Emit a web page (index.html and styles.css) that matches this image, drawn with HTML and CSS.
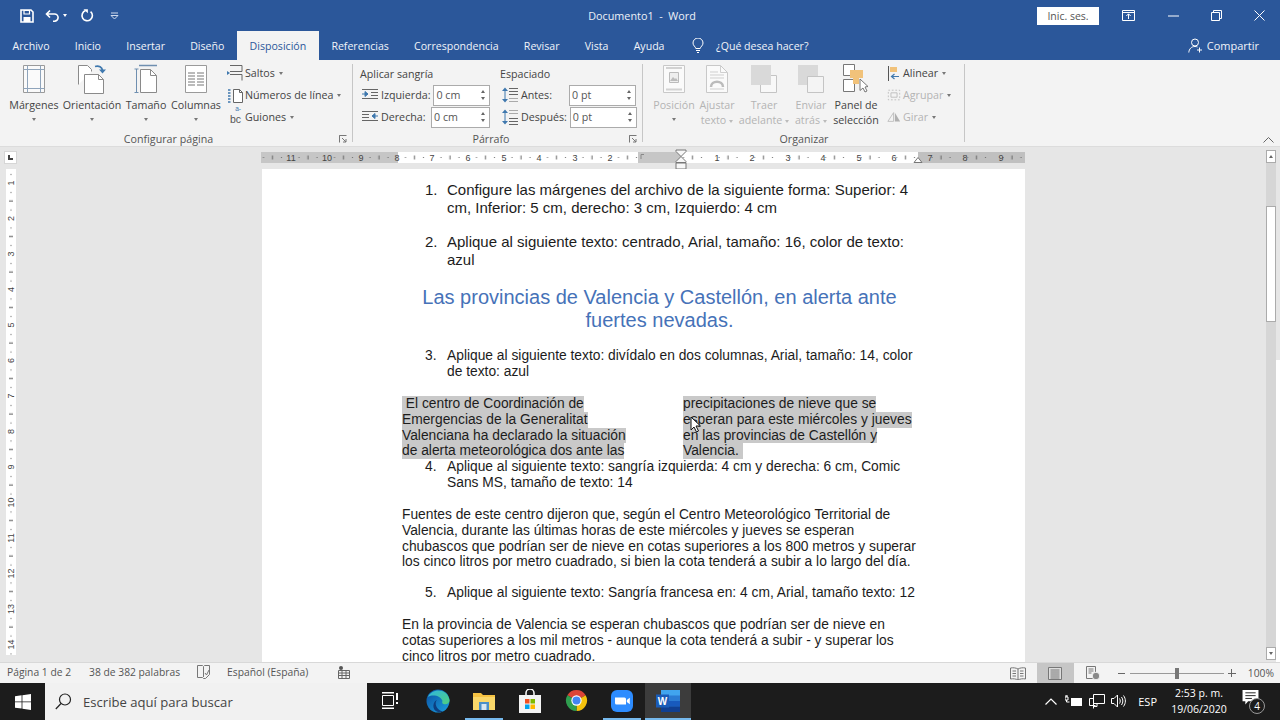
FILE: index.html
```html
<!DOCTYPE html>
<html lang="es">
<head>
<meta charset="utf-8">
<title>Documento1 - Word</title>
<link rel="stylesheet" href="styles.css">
</head>
<body>
<div class="window">
  <header class="titlebar">
    <div class="qat">
      <svg class="qat-save" width="16" height="16" viewBox="0 0 16 16"><path d="M2 2h10l2 2v10H2z" fill="none" stroke="#fff" stroke-width="1.6"/><path d="M5 2.500h5.500V6H5z" fill="none" stroke="#fff" stroke-width="1.2"/><path d="M4.500 9h7v5h-7z" fill="#fff"/></svg>
      <svg class="qat-undo" width="16" height="14" viewBox="0 0 16 14"><path d="M5 1.500 1.500 5 5 8.500M2 5h7.500a3.600 3.600 0 0 1 0 7.200H8" fill="none" stroke="#fff" stroke-width="1.6"/></svg>
      <span class="caret caret-white qat-caret"></span>
      <svg class="qat-redo" width="14" height="14" viewBox="0 0 14 14"><path d="M10.600 2.600a5.200 5.200 0 1 1-5-1" fill="none" stroke="#fff" stroke-width="1.6"/><path d="M3.500 .3h4.400v4z" fill="#fff"/></svg>
      <svg class="qat-more" width="9" height="8" viewBox="0 0 9 8"><path d="M1 1h7" stroke="#cfdaec"/><path d="M1 3.500h7L4.500 7z" fill="none" stroke="#cfdaec"/></svg>
    </div>
    <div class="doc-title">Documento1&nbsp; -&nbsp; Word</div>
    <div class="win-controls">
      <button class="signin">Inic. ses.</button>
      <svg class="wc-display" width="13" height="11" viewBox="0 0 13 11"><path d="M.5.500h12v10H.5z" fill="none" stroke="#fff"/><path d="M.5 2.500h12M6.500 9V4M4.300 6l2.200-2.200L8.700 6" fill="none" stroke="#fff"/></svg>
      <svg class="wc-min" width="11" height="2" viewBox="0 0 11 2"><path d="M0 1h11" stroke="#fff"/></svg>
      <svg class="wc-max" width="11" height="11" viewBox="0 0 11 11"><path d="M.5 2.500h8v8h-8zM2.500 2.500v-2h8v8h-2" fill="none" stroke="#fff"/></svg>
      <svg class="wc-close" width="11" height="11" viewBox="0 0 11 11"><path d="M.5.500l10 10M10.500.500l-10 10" stroke="#fff"/></svg>
    </div>
  </header>

  <nav class="tabs">
    <span class="tab">Archivo</span>
    <span class="tab">Inicio</span>
    <span class="tab">Insertar</span>
    <span class="tab">Diseño</span>
    <span class="tab tab-active">Disposición</span>
    <span class="tab">Referencias</span>
    <span class="tab">Correspondencia</span>
    <span class="tab">Revisar</span>
    <span class="tab">Vista</span>
    <span class="tab">Ayuda</span>
    <svg class="tell-icon" width="12" height="15" viewBox="0 0 12 15"><path d="M3.800 10.500C3.500 8.500 1 7.800 1 5a5 5 0 0 1 10 0c0 2.800-2.500 3.500-2.800 5.500zM4 12.500h4M5 14.500h2" fill="none" stroke="#fff"/></svg>
    <span class="tell-text">¿Qué desea hacer?</span>
    <span class="share">
      <svg width="15" height="15" viewBox="0 0 15 15"><circle cx="7" cy="4.500" r="3.500" fill="none" stroke="#fff"/><path d="M.8 14.500c.3-3.500 2.400-6 6.200-6 1 0 1.800.2 2.500.5M11.500 9.500v5M9 12h5" fill="none" stroke="#fff"/></svg>
      Compartir
    </span>
  </nav>

  <section class="ribbon">
    <div class="group group-page">
      <div class="group-body">
        <div class="big big-margins">
          <svg class="big-icon" width="24" height="28" viewBox="0 0 24 28"><path d="M1.500.5h21v27h-21z" fill="#fafafa" stroke="#9a9a9a"/><path d="M5.500.5v27M18.500.5v27M1.500 4.500h21M1.500 23.500h21" fill="none" stroke="#8fa4bb"/></svg>
          <span class="big-label">Márgenes</span><span class="caret"></span>
        </div>
        <div class="big big-orient">
          <svg class="big-icon" width="30" height="30" viewBox="0 0 30 30"><path d="M1.500 20.500v-19h9l4 4v2" fill="#fff" stroke="#8a8a8a"/><path d="M7.500 10.500h14l5 5v14h-19z" fill="#fff" stroke="#8a8a8a"/><path d="M21.500 10.500v5h5" fill="none" stroke="#8a8a8a"/><path d="M18 2.500c4-1 7 .5 7.500 4" fill="none" stroke="#3f78ae" stroke-width="1.800"/><path d="M22 5.500h7l-3.500 4z" fill="#3f78ae"/></svg>
          <span class="big-label">Orientación</span><span class="caret"></span>
        </div>
        <div class="big big-size">
          <svg class="big-icon" width="24" height="30" viewBox="0 0 24 30"><path d="M5 1.500h18" stroke="#6f8fb0" stroke-width="1.500"/><path d="M2.500 5v24M.5 5h4M.5 28.500h4" fill="none" stroke="#6f8fb0"/><path d="M6.500 5.500h10l6 6v17h-16z" fill="#fff" stroke="#8a8a8a"/><path d="M16.500 5.500v6h6" fill="none" stroke="#8a8a8a"/></svg>
          <span class="big-label">Tamaño</span><span class="caret"></span>
        </div>
        <div class="big big-cols">
          <svg class="big-icon" width="22" height="28" viewBox="0 0 22 28"><path d="M.5.5h21v27H.5z" fill="#fff" stroke="#9a9a9a"/><path d="M3 8h7M12 8h7M3 11h7M12 11h7M3 14h7M12 14h7M3 17h7M12 17h7M3 20h7M12 20h7" stroke="#777"/></svg>
          <span class="big-label">Columnas</span><span class="caret"></span>
        </div>
        <div class="small-col small-col-page">
          <div class="small-row">
            <svg width="16" height="16" viewBox="0 0 16 16"><path d="M15 .5v6M3 .5h12M3 6.500h12M3 9.500h12M15 9.500v6" fill="none" stroke="#666"/><path d="M0 6l3 2-3 2z" fill="#3f78ae"/></svg>
            <span>Saltos</span><span class="caret"></span>
          </div>
          <div class="small-row">
            <svg width="16" height="16" viewBox="0 0 16 16"><path d="M6.500 2.500h6l3 3v10h-9z" fill="#fff" stroke="#666"/><path d="M12.500 2.500v3h3" fill="none" stroke="#666"/><path d="M1 3h3M1 6h3M1 9h3M1 12h3M1 15h3" stroke="#3f78ae" stroke-width="1.500" stroke-dasharray="2 .5"/></svg>
            <span>Números de línea</span><span class="caret"></span>
          </div>
          <div class="small-row">
            <span class="hyph-icon"><span class="hyph-a">a-</span><span class="hyph-bc">bc</span></span>
            <span>Guiones</span><span class="caret"></span>
          </div>
        </div>
      </div>
      <div class="group-label">Configurar página</div>
      <svg class="launcher" width="8" height="8" viewBox="0 0 8 8"><path d="M.5 3V.5h7M.5 .5v7M3 3l4 4M4 7h3V4" fill="none" stroke="#777"/></svg>
    </div>

    <div class="group group-para">
      <div class="group-body para-body">
        <div class="para-col para-indent">
          <div class="para-head">Aplicar sangría</div>
          <div class="para-row">
            <svg width="16" height="12" viewBox="0 0 16 12"><path d="M0 .5h16M9 3.500h7M9 6.500h7M0 9.500h16" stroke="#666"/><path d="M0 5h5M3 2.500l3 2.500-3 2.500z" fill="#3f78ae" stroke="#3f78ae"/></svg>
            <span>Izquierda:</span>
            <div class="spin spin-indent-a"><span class="spin-val">0 cm</span><span class="spin-arrows"><i class="up"></i><i class="down"></i></span></div>
          </div>
          <div class="para-row">
            <svg width="16" height="12" viewBox="0 0 16 12"><path d="M0 .5h16M0 3.500h7M0 6.500h7M0 9.500h16" stroke="#666"/><path d="M16 5h-5M13 2.500 10 5l3 2.500z" fill="#3f78ae" stroke="#3f78ae"/></svg>
            <span>Derecha:</span>
            <div class="spin spin-indent-b"><span class="spin-val">0 cm</span><span class="spin-arrows"><i class="up"></i><i class="down"></i></span></div>
          </div>
        </div>
        <div class="para-col para-space">
          <div class="para-head">Espaciado</div>
          <div class="para-row">
            <svg width="16" height="16" viewBox="0 0 16 16"><path d="M7 1.500h9M7 4.500h9M7 7.500h9" stroke="#666"/><path d="M7 11.500h9M7 14.500h9" stroke="#aaa"/><path d="M3 3v10" stroke="#3f78ae"/><path d="M0 4l3-3.500L6 4zM0 12l3 3.500L6 12z" fill="#3f78ae"/></svg>
            <span>Antes:</span>
            <div class="spin spin-space-a"><span class="spin-val">0 pt</span><span class="spin-arrows"><i class="up"></i><i class="down"></i></span></div>
          </div>
          <div class="para-row">
            <svg width="16" height="16" viewBox="0 0 16 16"><path d="M7 1.500h9M7 4.500h9" stroke="#aaa"/><path d="M7 9.500h9M7 12.500h9M7 15.500h9" stroke="#666"/><path d="M3 3v10" stroke="#3f78ae"/><path d="M0 4l3-3.500L6 4zM0 12l3 3.500L6 12z" fill="#3f78ae"/></svg>
            <span>Después:</span>
            <div class="spin spin-space-b"><span class="spin-val">0 pt</span><span class="spin-arrows"><i class="up"></i><i class="down"></i></span></div>
          </div>
        </div>
      </div>
      <div class="group-label">Párrafo</div>
      <svg class="launcher" width="8" height="8" viewBox="0 0 8 8"><path d="M.5 3V.5h7M.5 .5v7M3 3l4 4M4 7h3V4" fill="none" stroke="#777"/></svg>
    </div>

    <div class="group group-arrange">
      <div class="group-body">
        <div class="big off big-pos">
          <svg class="big-icon" width="22" height="28" viewBox="0 0 22 28"><path d="M.5.5h21v27H.5z" fill="#fafafa" stroke="#c8c8c8"/><path d="M3 3h16M3 24.500h16" stroke="#d2d2d2" stroke-width="2"/><path d="M6.500 7.500h9v10h-9z" fill="#eee" stroke="#bbb"/><path d="M7 16l3-4 2 2 1-1 2 3z" fill="#bbb"/></svg>
          <span class="big-label">Posición</span><span class="caret"></span>
        </div>
        <div class="big off big-wrap">
          <svg class="big-icon" width="22" height="28" viewBox="0 0 22 28"><path d="M.5.5h14l7 7v20H.5z" fill="#fafafa" stroke="#c8c8c8"/><path d="M14.500.5v7h7M4 7h8M4 10h14M4 13h14M4 24h14" fill="none" stroke="#cfcfcf"/><path d="M5 22c0-7 12-7 12 0" fill="none" stroke="#bbb" stroke-width="2.500"/></svg>
          <span class="big-label">Ajustar<br>texto<span class="caret caret-inline"></span></span>
        </div>
        <div class="big off big-front">
          <svg class="big-icon" width="26" height="28" viewBox="0 0 26 28"><path d="M9.500 10.500h16v17h-16z" fill="#f8f8f8" stroke="#c4c4c4"/><path d="M0 0h20v20H0z" fill="#d9d9d9"/></svg>
          <span class="big-label">Traer<br>adelante<span class="caret caret-inline"></span></span>
        </div>
        <div class="big off big-back">
          <svg class="big-icon" width="26" height="28" viewBox="0 0 26 28"><path d="M0 0h20v20H0z" fill="#d9d9d9"/><path d="M9.500 11.500h16v16h-16z" fill="#f4f4f4" stroke="#c4c4c4"/></svg>
          <span class="big-label">Enviar<br>atrás<span class="caret caret-inline"></span></span>
        </div>
        <div class="big big-panel">
          <svg class="big-icon" width="28" height="30" viewBox="0 0 28 30"><path d="M1.500 .5h11v11h-11z" fill="#fff" stroke="#777"/><path d="M1.500 15.500h11v12h-11z" fill="#fff" stroke="#777"/><path d="M8 6h13v8h-4v6h-6v-6H8z" fill="#f1c27a"/><path d="M18 15l8 7.500-3 .5 2 4-2 1-2-4-3 2.500z" fill="#fff" stroke="#777"/></svg>
          <span class="big-label">Panel de<br>selección</span>
        </div>
        <div class="small-col small-col-arrange">
          <div class="small-row">
            <svg width="14" height="15" viewBox="0 0 14 15"><path d="M1.500 0v15" stroke="#555"/><path d="M3 1h7v5H3z" fill="#f1c27a"/><path d="M12 10.500H5M7.500 8 4.500 10.500 7.500 13" fill="none" stroke="#3f78ae" stroke-width="1.200"/></svg>
            <span>Alinear</span><span class="caret"></span>
          </div>
          <div class="small-row off">
            <svg width="14" height="14" viewBox="0 0 16 14"><path d="M1.500 1.500h13v11h-13z" fill="none" stroke="#bbb" stroke-dasharray="2 2"/><path d="M4.500 4.500h7v5h-7z" fill="none" stroke="#bbb"/></svg>
            <span>Agrupar</span><span class="caret"></span>
          </div>
          <div class="small-row off">
            <svg width="14" height="14" viewBox="0 0 16 14"><path d="M7.500 2v10H1z" fill="none" stroke="#bbb"/><path d="M9 2v10h6z" fill="#b0b0b0"/></svg>
            <span>Girar</span><span class="caret"></span>
          </div>
        </div>
      </div>
      <div class="group-label">Organizar</div>
    </div>
    <svg class="collapse" width="11" height="6" viewBox="0 0 11 6"><path d="M.5 5.500l5-5 5 5" fill="none" stroke="#666"/></svg>
  </section>

  <main class="workspace">
    <div class="ws-main">
      <div class="ws-head">
        <div class="corner"><span class="corner-mark"></span></div>
        <svg class="hruler" width="764" height="22" viewBox="0 0 764 22">
          <defs>
            <pattern id="tickL" x="-6.500" y="0" width="35.500" height="11" patternUnits="userSpaceOnUse"><rect x="8.500" y="5" width="1" height="1" fill="#666"/><rect x="17.500" y="3.500" width="1" height="4" fill="#666"/><rect x="26.500" y="5" width="1" height="1" fill="#666"/></pattern>
          </defs>
          <rect x="0" y="5" width="137" height="11" fill="#c6c6c6"/>
          <rect x="137" y="5" width="240" height="11" fill="#fff"/>
          <rect x="377" y="5" width="43" height="11" fill="#c6c6c6"/>
          <rect x="420" y="5" width="237" height="11" fill="#fff"/>
          <rect x="657" y="5" width="107" height="11" fill="#c0c0c0"/>
          <g transform="translate(0 5)"><rect width="377" height="11" fill="url(#tickL)"/></g>
          <g transform="translate(420 5)"><rect x="0" width="344" height="11" fill="url(#tickL)"/></g>
          <g class="ruler-nums">
            <text x="30" y="14">11</text><text x="66" y="14">10</text><text x="100" y="14">9</text><text x="136" y="14">8</text><text x="171" y="14">7</text><text x="207" y="14">6</text><text x="243" y="14">5</text><text x="278" y="14">4</text><text x="314" y="14">3</text><text x="349" y="14">2</text>
            <text x="456" y="14">1</text><text x="491" y="14">2</text><text x="527" y="14">3</text><text x="562" y="14">4</text><text x="598" y="14">5</text><text x="633" y="14">6</text><text x="669" y="14">7</text><text x="704" y="14">8</text><text x="740" y="14">9</text>
          </g>
          <path d="M380 12V7.500h3" fill="none" stroke="#888"/>
          <path d="M415 3h10v1.500l-5 5-5-5zM415 16h10v6h-10zM415 15.500v-1l5-5 5 5v1z" fill="#f7f7f7" stroke="#777"/>
          <path d="M653 15.500l4-5 4 5z" fill="#fff" stroke="#777"/>
        </svg>
      </div>
      <div class="ws-body">
        <svg class="vruler" width="10" height="486" viewBox="0 0 10 486">
          <defs>
            <pattern id="tickV" x="0" y="14" width="10" height="35.500" patternUnits="userSpaceOnUse"><rect x="4.500" y="9" width="1" height="1" fill="#555"/><rect x="3" y="17.500" width="4" height="1" fill="#555"/><rect x="4.500" y="26.500" width="1" height="1" fill="#555"/></pattern>
          </defs>
          <rect width="10" height="486" fill="#fff"/>
          <rect width="10" height="486" fill="url(#tickV)"/>
          <g class="ruler-nums">
            <text transform="translate(8 14) rotate(-90)">1</text><text transform="translate(8 49.500) rotate(-90)">2</text><text transform="translate(8 85) rotate(-90)">3</text><text transform="translate(8 120.500) rotate(-90)">4</text><text transform="translate(8 156) rotate(-90)">5</text><text transform="translate(8 191.500) rotate(-90)">6</text><text transform="translate(8 227) rotate(-90)">7</text><text transform="translate(8 262.500) rotate(-90)">8</text><text transform="translate(8 298) rotate(-90)">9</text><text transform="translate(8 333.500) rotate(-90)">10</text><text transform="translate(8 369) rotate(-90)">11</text><text transform="translate(8 404.500) rotate(-90)">12</text><text transform="translate(8 440) rotate(-90)">13</text><text transform="translate(8 475.500) rotate(-90)">14</text>
          </g>
        </svg>
        <article class="page">
          <div class="item lh18"><span class="num">1.</span><span>Configure las márgenes del archivo de la siguiente forma: Superior: 4<br>cm, Inferior: 5 cm, derecho: 3 cm, Izquierdo: 4 cm</span></div>
          <div class="item lh18 gap16"><span class="num">2.</span><span>Aplique al siguiente texto: centrado, Arial, tamaño: 16, color de texto:<br>azul</span></div>
          <h1 class="heading">Las provincias de Valencia y Castellón, en alerta ante<br>fuertes nevadas.</h1>
          <div class="item lh16 gap16"><span class="num">3.</span><span>Aplique al siguiente texto: divídalo en dos columnas, Arial, tamaño: 14, color<br>de texto: azul</span></div>
          <div class="columns">
            <div class="col">
              <span class="sel">&nbsp;El centro de Coordinación de</span>
              <span class="sel">Emergencias de la Generalitat</span>
              <span class="sel">Valenciana ha declarado la situación</span>
              <span class="sel">de alerta meteorológica dos ante las</span>
            </div>
            <div class="col">
              <span class="sel">precipitaciones de nieve que se</span>
              <span class="sel">esperan para este miércoles y jueves</span>
              <span class="sel">en las provincias de Castellón y</span>
              <span class="sel">Valencia.&nbsp;</span>
            </div>
          </div>
          <div class="item lh16"><span class="num">4.</span><span>Aplique al siguiente texto: sangría izquierda: 4 cm y derecha: 6 cm, Comic<br>Sans MS, tamaño de texto: 14</span></div>
          <p class="para">Fuentes de este centro dijeron que, según el Centro Meteorológico Territorial de<br>Valencia, durante las últimas horas de este miércoles y jueves se esperan<br>chubascos que podrían ser de nieve en cotas superiores a los 800 metros y superar<br>los cinco litros por metro cuadrado, si bien la cota tenderá a subir a lo largo del día.</p>
          <div class="item lh16 gap15"><span class="num">5.</span><span>Aplique al siguiente texto: Sangría francesa en: 4 cm, Arial, tamaño texto: 12</span></div>
          <p class="para">En la provincia de Valencia se esperan chubascos que podrían ser de nieve en<br>cotas superiores a los mil metros - aunque la cota tenderá a subir - y superar los<br>cinco litros por metro cuadrado.</p>
          <svg class="pointer" width="12" height="17" viewBox="0 0 12 17"><path d="M1 1v13l3-3 2.500 5 2-1-2.500-5h4.500z" fill="#fff" stroke="#111"/></svg>
        </article>
      </div>
    </div>
    <div class="vscroll">
      <div class="sb-btn"><i class="up"></i></div>
      <div class="sb-track sb-track-a"></div>
      <div class="sb-thumb"></div>
      <div class="sb-track sb-track-b"></div>
      <div class="sb-btn"><i class="down"></i></div>
    </div>
    <div class="ws-edge"></div>
  </main>

  <footer class="status">
    <span class="st-page">Página 1 de 2</span>
    <span class="st-words">38 de 382 palabras</span>
    <svg class="st-proof" width="13" height="14" viewBox="0 0 13 14"><path d="M.5.500h5l1 1 1-1h5v9l-4 4h-2l-1-1-5 0z" fill="none" stroke="#777"/><path d="M6.500 2v10M8 8l1.500 2L12 5" fill="none" stroke="#777"/></svg>
    <span class="st-lang">Español (España)</span>
    <svg class="st-macro" width="12" height="13" viewBox="0 0 12 13"><circle cx="3" cy="2" r="2" fill="#555"/><path d="M.5 4.500h11v8H.5zM.5 7h11M.5 9.500h11M4 4.500v8M8 4.500v8" fill="none" stroke="#666"/></svg>
    <div class="st-right">
      <svg width="16" height="13" viewBox="0 0 16 13"><path d="M8 2C6 .8 3 .5.500 1v11c2.500-.5 5.500-.2 7.500 1 2-1.200 5-1.500 7.500-1V1C13 .5 10 .8 8 2zM8 2v11M2.500 4h3.500M2.500 6.500h3.500M2.500 9h3.500M10 4h3.500M10 6.500h3.500M10 9h3.500" fill="none" stroke="#777"/></svg>
      <div class="view-active">
        <svg width="14" height="13" viewBox="0 0 14 13"><path d="M.5.500h13v12H.5z" fill="#ddd" stroke="#777"/><path d="M2.500 3h9M2.500 5h9M2.500 7h9M2.500 9h9M2.500 11h9" stroke="#777"/></svg>
      </div>
      <svg class="st-web" width="14" height="14" viewBox="0 0 14 14"><path d="M.5.500h9v12h-9zM2.500 3h5M2.500 5h5M2.500 7h3" fill="none" stroke="#777"/><circle cx="10" cy="10" r="3.800" fill="#888" stroke="#f3f3f3"/></svg>
      <span class="zoom-minus"></span>
      <div class="slider"><span class="slider-thumb"></span></div>
      <span class="zoom-plus"></span>
      <span class="zoom-val">100%</span>
    </div>
  </footer>

  <div class="taskbar">
    <div class="tb-start">
      <svg width="16" height="16" viewBox="0 0 16 16"><path d="M0 2.300 6.600 1.300V7.500H0zM7.400 1.200 16 0V7.500H7.400zM0 8.300H6.600V14.600L0 13.700zM7.400 8.300H16V16L7.400 14.800z" fill="#fff"/></svg>
    </div>
    <div class="tb-search">
      <svg width="17" height="17" viewBox="0 0 17 17"><circle cx="10" cy="6.500" r="5.500" fill="none" stroke="#222" stroke-width="1.200"/><path d="M6 10.500.8 16" stroke="#222" stroke-width="1.200"/></svg>
      <span>Escribe aquí para buscar</span>
    </div>
    <div class="tb-icons">
      <div class="tb-app tb-taskview">
        <svg width="16" height="17" viewBox="0 0 16 17"><path d="M.5 3.500h11v10H.5z" fill="none" stroke="#fff"/><path d="M0 0h12v1.500H0zM0 15.500h12V17H0zM14 1h2v7h-2zM14 10h2v2h-2z" fill="#fff"/></svg>
      </div>
      <div class="tb-app">
        <svg width="24" height="24" viewBox="0 0 24 24"><defs><linearGradient id="edgeA" x1="0" y1="0" x2="1" y2="1"><stop offset="0" stop-color="#0b4fa3"/><stop offset="1" stop-color="#1aa0dc"/></linearGradient><linearGradient id="edgeB" x1="0" y1="0" x2="1" y2="1"><stop offset="0" stop-color="#2fb5e0"/><stop offset="1" stop-color="#4fd07e"/></linearGradient></defs><circle cx="12" cy="12" r="11.500" fill="url(#edgeA)"/><path d="M2 8C5-.5 21-2 23.500 11c.5 3-3 5-6 4-1.500-.5-1.500-2-1-3C15 7 7 5 2 8z" fill="url(#edgeB)"/><path d="M11 11c-3 3-1 10 6 11.500-1 .4-3 1-5 .5C5 21 7 12 11 11z" fill="#0d3f80"/></svg>
      </div>
      <div class="tb-app tb-running tb-short">
        <svg width="22" height="20" viewBox="0 0 22 20"><path d="M0 2h8l2 2h12v15H0z" fill="#f5c242"/><path d="M0 6h22v13H0z" fill="#f9d76a"/><path d="M6 11h10v8H6z" fill="#4a8fc9"/><path d="M8.500 13h5v6h-5z" fill="#d7e6f2"/></svg>
      </div>
      <div class="tb-app">
        <svg width="22" height="24" viewBox="0 0 22 24"><path d="M7 6V4a4 4 0 0 1 8 0v2" fill="none" stroke="#fff" stroke-width="1.500"/><path d="M0 6h22v18H0z" fill="#f4f4f4"/><path d="M6 10h4.500v4.500H6z" fill="#f25022"/><path d="M11.500 10H16v4.500h-4.500z" fill="#7fba00"/><path d="M6 15.500h4.500V20H6z" fill="#00a4ef"/><path d="M11.500 15.500H16V20h-4.500z" fill="#ffb900"/></svg>
      </div>
      <div class="tb-app">
        <svg width="23" height="23" viewBox="0 0 24 24"><path d="M2.470 6.500a11 11 0 0 1 19.060 0L12 12z" fill="#db4437"/><path d="M21.530 6.500A11 11 0 0 1 12 23L12 12z" fill="#f4c20d"/><path d="M12 23A11 11 0 0 1 2.470 6.500L12 12z" fill="#2f9e4f"/><circle cx="12" cy="12" r="5.400" fill="#fff"/><circle cx="12" cy="12" r="4.200" fill="#4285f4"/></svg>
      </div>
      <div class="tb-app tb-running tb-short">
        <svg width="22" height="22" viewBox="0 0 22 22"><rect width="22" height="22" rx="6" fill="#2d8cff"/><path d="M4 7.500h9.500a1.500 1.500 0 0 1 1.500 1.500v5.500H5.500A1.500 1.500 0 0 1 4 13z" fill="#fff"/><path d="M15.800 10l3-2.300v6.600l-3-2.300z" fill="#fff"/></svg>
      </div>
      <div class="tb-app tb-running tb-word">
        <svg width="24" height="22" viewBox="0 0 24 22"><path d="M5 0h19v22H5z" fill="#2b7cd3"/><path d="M5 0h19v5.500H5z" fill="#41a5ee"/><path d="M5 11h19v5.500H5z" fill="#185abd"/><path d="M5 16.500h19V22H5z" fill="#103f91"/><rect y="4.500" width="13" height="13" fill="#1a5cb8"/><text class="word-w" x="6.500" y="15">W</text></svg>
      </div>
    </div>
    <div class="tray">
      <svg class="tray-up" width="12" height="7" viewBox="0 0 12 7"><path d="M.5 6.500 6 1l5.500 5.500" fill="none" stroke="#fff" stroke-width="1.200"/></svg>
      <svg class="tray-power" width="17" height="12" viewBox="0 0 17 12"><path d="M6 3h11v8H6z" fill="#fff"/><path d="M0 2h3v3H0zM1 0v2M2 0v2M1.500 5v2h3" fill="none" stroke="#fff"/></svg>
      <svg class="tray-net" width="16" height="15" viewBox="0 0 16 15"><path d="M4.500.500h11v9h-11z" fill="none" stroke="#fff"/><path d="M.5 4.500h4v10M.5 4.500v7h6M8 9.500v3h-3" fill="none" stroke="#fff"/></svg>
      <svg class="tray-vol" width="15" height="14" viewBox="0 0 15 14"><path d="M.5 4.500h2.500l3.500-3.500v12l-3.500-3.500H.5z" fill="none" stroke="#fff"/><path d="M8.500 4.500c1 1.500 1 3.500 0 5M10.500 3c1.800 2.500 1.800 5.500 0 8M12.500 1.500c2.500 3.500 2.500 7.500 0 11" fill="none" stroke="#fff"/></svg>
      <span class="tray-lang">ESP</span>
      <div class="clock"><span>2:53 p. m.</span><span>19/06/2020</span></div>
      <div class="notif">
        <svg width="17" height="15" viewBox="0 0 17 16"><path d="M0 0h17v12H6l-3 3.500V12H0z" fill="#fff"/><path d="M3 3h11M3 6h11M3 9h7" stroke="#1d1d1d"/></svg>
        <span class="notif-badge">4</span>
      </div>
    </div>
  </div>
</div>
</body>
</html>
```

FILE: styles.css
```css
* { box-sizing: border-box; }
html, body { margin: 0; padding: 0; }
body { width: 1280px; height: 720px; overflow: hidden; background: #e6e6e6; font-family: "Open Sans", "Noto Sans", sans-serif; }
svg { display: block; flex: none; }
.window { width: 1280px; height: 720px; display: flex; flex-direction: column; overflow: hidden; }

/* title bar */
.titlebar { height: 31px; flex: none; background: #2b579a; color: #fff; display: flex; align-items: center; }
.qat { flex: 1 1 0; display: flex; align-items: center; padding-left: 19px; }
.qat-undo { margin-left: 10px; }
.qat-caret { margin-left: 2px; }
.qat-redo { margin-left: 13px; }
.qat-more { margin-left: 16px; }
.doc-title { font-size: 10.8px; color: #eef2f8; white-space: nowrap; }
.win-controls { flex: 1 1 0; display: flex; align-items: center; justify-content: flex-end; padding-right: 15px; }
.signin { width: 62px; height: 18px; border: 0; padding: 0; margin: 0; background: #fff; color: #555; font: 10.5px "Open Sans", sans-serif; }
.wc-display { margin-left: 23px; }
.wc-min { margin-left: 33px; }
.wc-max { margin-left: 32px; }
.wc-close { margin-left: 32px; }

/* tabs */
.tabs { height: 29px; flex: none; background: #2b579a; display: flex; align-items: stretch; color: #f1f4f9; font-size: 10.6px; }
.tab { padding: 1px 12.6px 0; display: flex; align-items: center; }
.tab-active { background: #f3f3f3; color: #2b579a; }
.tell-icon { align-self: center; margin-left: 15px; }
.tell-text { align-self: center; margin-left: 12px; }
.share { margin-left: auto; padding-right: 21px; display: flex; align-items: center; gap: 4px; font-size: 11px; }

/* ribbon */
.ribbon { height: 87px; flex: none; background: #f3f3f3; border-bottom: 1px solid #dcdcdc; display: flex; position: relative; font-size: 10.7px; color: #444; }
.group { position: relative; display: flex; flex-direction: column; padding-top: 3px; }
.group::after { content: ""; position: absolute; right: 0; top: 4px; bottom: 4px; width: 1px; background: #c6c6c6; }
.group-page { width: 353px; }
.group-para { width: 290px; }
.group-arrange { width: 322px; }
.group-body { flex: 1; min-height: 0; display: flex; }
.group-label { height: 15px; flex: none; text-align: center; font-size: 10.7px; color: #555; line-height: 16px; }
.group-page .group-label { padding-right: 16px; }
.group-para .group-label { padding-right: 14px; }
.launcher { position: absolute; right: 6px; bottom: 3px; }
.collapse { position: absolute; right: 6px; bottom: 3px; }

.big { display: flex; flex-direction: column; align-items: center; text-align: center; line-height: 15px; white-space: nowrap; }
.big-icon { height: 32px; margin-bottom: 3px; }
.big-label { display: block; }
.big > .caret { margin-top: 5px; }
.big-margins { width: 50px; margin-left: 9px; }
.big-orient { width: 58px; margin-left: 4px; }
.big-size { width: 40px; margin-left: 5px; }
.big-cols { width: 50px; margin-left: 5px; }
.small-col { display: flex; flex-direction: column; margin-top: -1px; }
.small-col-page { margin-left: 6px; }
.small-col-arrange { margin-left: 8px; }
.small-row { height: 22px; display: flex; align-items: center; gap: 2px; white-space: nowrap; }
.small-row .caret { margin-left: 2px; }
.hyph-icon { width: 16px; height: 20px; margin-top: -4px; flex: none; display: flex; flex-direction: column; align-items: flex-end; font-family: "Liberation Sans", sans-serif; color: #555; }
.hyph-a { height: 8px; font-size: 6.5px; line-height: 8px; color: #3f78ae; padding-right: 2px; }
.hyph-bc { height: 12px; font-size: 10.5px; line-height: 12px; padding-right: 2px; }
.off, .off .big-label { color: #b4b4b4; }
.caret { display: inline-block; width: 0; height: 0; border-left: 2.5px solid transparent; border-right: 2.5px solid transparent; border-top: 3px solid #777; }
.caret-inline { margin-left: 3px; vertical-align: middle; border-top-color: #bbb; }
.caret-white { border-top-color: #fff; }
.big-pos { width: 42px; margin-left: 10px; }
.big-wrap { width: 36px; margin-left: 4px; }
.big-front { width: 48px; margin-left: 5px; }
.big-back { width: 32px; margin-left: 7px; }
.big-panel { width: 46px; margin-left: 6px; }

/* paragraph */
.para-body { padding-left: 7px; gap: 10px; }
.para-col { display: flex; flex-direction: column; flex: none; }
.para-indent { width: 130px; }
.para-space { width: 136px; }
.para-head { height: 21px; line-height: 22px; }
.para-row { height: 22px; display: flex; align-items: center; gap: 3px; white-space: nowrap; padding-left: 2px; }
.spin { flex: none; margin-left: auto; width: 57px; height: 21px; border: 1px solid #ababab; background: #fff; display: flex; align-items: center; justify-content: space-between; padding-left: 2px; color: #555; }
.spin-indent-b { width: 59px; }
.spin-space-a, .spin-space-b { width: 67px; }
.spin-arrows { width: 12px; height: 100%; display: flex; flex-direction: column; align-items: center; justify-content: center; gap: 4px; }
.up, .down { display: block; width: 0; height: 0; border-left: 2.5px solid transparent; border-right: 2.5px solid transparent; }
.up { border-bottom: 3px solid #666; }
.down { border-top: 3px solid #666; }

/* workspace */
.workspace { flex: 1; display: flex; min-height: 0; background: #e6e6e6; }
.ws-main { width: 1266px; flex: none; display: flex; flex-direction: column; min-height: 0; }
.ws-head { height: 22px; flex: none; display: flex; }
.corner { width: 13px; height: 13px; margin: 4px 0 0 4px; background: #fff; border: 1px solid #d6d6d6; flex: none; }
.corner-mark { display: block; width: 5px; height: 5px; margin: 3px 0 0 3px; border-left: 2px solid #444; border-bottom: 2px solid #444; }
.hruler { margin-left: 244px; }
.ws-body { flex: 1; min-height: 0; display: flex; align-items: flex-start; }
.vruler { margin-left: 6px; }
.ruler-nums text { font: 9px "Liberation Sans", sans-serif; fill: #444; text-anchor: middle; }
.page { position: relative; width: 763px; height: 493px; margin-left: 246px; overflow: hidden; background: #fff; padding: 12px 100px 0 140px; font: 13.8px "Liberation Sans", Arial, sans-serif; color: #1c1c1c; }
.item { display: flex; white-space: nowrap; padding-left: 23px; }
.num { width: 22px; flex: none; }
.lh18 { line-height: 18px; font-size: 15px; }
.lh16 { line-height: 16px; }
.gap16 { margin-top: 16px; }
.gap15 { margin-top: 15px; }
.heading { margin: 17px 0 0; font-weight: 400; font-size: 20px; line-height: 23px; color: #4672b8; text-align: center; white-space: nowrap; width: 515px; }
.columns { display: flex; margin-top: 16px; }
.col { width: 281px; flex: none; }
.sel { display: block; width: fit-content; background: #c9c9c9; line-height: 15.75px; white-space: nowrap; }
.para { margin: 16px 0 0; line-height: 15.75px; white-space: nowrap; }
.pointer { position: absolute; left: 428px; top: 247px; }

/* scrollbar */
.vscroll { width: 10px; flex: none; display: flex; flex-direction: column; margin-top: 3px; margin-bottom: 2px; background: #d6d6d6; }
.sb-btn { height: 13px; flex: none; background: #fff; border: 1px solid #ababab; display: flex; align-items: center; justify-content: center; }
.sb-track-a { height: 43px; flex: none; }
.sb-track-b { flex: 1; }
.sb-thumb { height: 116px; flex: none; background: #fff; border: 1px solid #ababab; }
.ws-edge { flex: 1; background: linear-gradient(#e6e6e6 213px, #fff 213px); }

/* status */
.status { height: 21px; flex: none; background: #f3f3f3; border-top: 1px solid #d8d8d8; padding-bottom: 2px; display: flex; align-items: center; font-size: 10.3px; color: #555; }
.st-page { margin-left: 7px; }
.st-words { margin-left: 18px; }
.st-proof { margin-left: 17px; }
.st-lang { margin-left: 17px; }
.st-macro { margin-left: 30px; }
.st-right { margin-left: auto; display: flex; align-items: center; height: calc(100% + 2px); margin-bottom: -2px; }
.view-active { width: 37px; height: 100%; background: #c6c6c6; display: flex; align-items: center; justify-content: center; margin-left: 11px; }
.st-web { margin-left: 12px; }
.zoom-minus { width: 7px; height: 1px; background: #666; margin-left: 18px; }
.slider { width: 94px; height: 1px; background: #999; margin-left: 5px; position: relative; }
.slider-thumb { position: absolute; left: 45px; top: -5px; width: 4px; height: 11px; background: #777; }
.zoom-plus { width: 8px; height: 8px; margin-left: 4px; background: linear-gradient(#666, #666) center / 100% 1px no-repeat, linear-gradient(#666, #666) center / 1px 100% no-repeat; }
.zoom-val { margin-left: 12px; margin-right: 6px; }

/* taskbar */
.taskbar { height: 37px; flex: none; background: #1c1c1c; display: flex; align-items: stretch; color: #fff; }
.tb-start { width: 45px; flex: none; display: flex; align-items: center; justify-content: center; }
.tb-search { width: 322px; flex: none; background: #f1f1f1; color: #444; display: flex; align-items: center; gap: 11px; padding-left: 10px; font-size: 13.1px; }
.tb-icons { display: flex; flex: none; }
.tb-app { width: 46px; flex: none; display: flex; align-items: center; justify-content: center; border-bottom: 2px solid transparent; }
.tb-taskview { margin-right: 2px; }
.tb-short { width: 38px; margin: 0 4px; }
.tb-running { border-bottom-color: #76b9ed; }
.tb-word { background: #3c3c3c; }
.word-w { font: 700 10px "Liberation Sans", sans-serif; fill: #fff; text-anchor: middle; }
.tray { margin-left: auto; display: flex; align-items: center; font-size: 11px; padding-bottom: 1px; }
.tray-up { margin-right: 8px; }
.tray-power { margin-right: 7px; }
.tray-net { margin-right: 6px; }
.tray-vol { margin-right: 12px; }
.tray-lang { margin-right: 7px; }
.clock { width: 70px; display: flex; flex-direction: column; align-items: center; line-height: 16px; font-size: 10.5px; margin-right: 2px; padding-bottom: 1px; }
.notif { width: 32px; height: 22px; padding-left: 6px; position: relative; margin-right: 12px; }
.notif-badge { position: absolute; left: 13px; top: 8px; width: 16px; height: 16px; border-radius: 50%; background: #1c1c1c; border: 1px solid #999; font-size: 10px; line-height: 14px; text-align: center; }
```
